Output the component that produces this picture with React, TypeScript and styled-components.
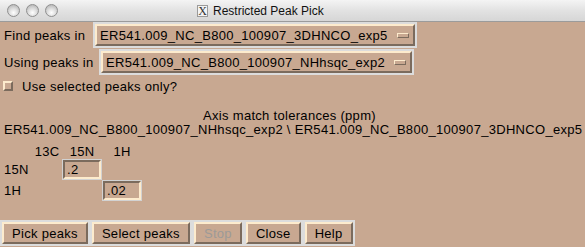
import styled, { createGlobalStyle } from "styled-components";

const BG = "#c8a891";
const LIGHT = "#fdebcd";
const DARK = "#7b6b5d";
const RING = "#dcdcdc";

const GlobalStyle = createGlobalStyle`
  html, body {
    margin: 0;
    padding: 0;
    background: ${BG};
  }
`;

const Window = styled.div`
  width: 585px;
  height: 247px;
  display: flex;
  flex-direction: column;
  background: ${BG};
  font-family: "Liberation Sans", Arial, sans-serif;
  font-size: 13px;
  letter-spacing: 0.3px;
  color: #000;
  overflow: hidden;
`;

const TitleBar = styled.div`
  height: 21px;
  flex: none;
  display: flex;
  align-items: center;
  background: linear-gradient(#f4f4f4, #e2e2e2 50%, #d6d6d6);
  border-bottom: 1px solid #9b9b9b;
  padding-left: 7px;
`;

const Lights = styled.div`
  display: flex;
  gap: 6px;
`;

const Light = styled.span`
  width: 13px;
  height: 13px;
  border-radius: 50%;
  box-sizing: border-box;
  border: 1px solid #8f8f8f;
  background: radial-gradient(circle at 50% 70%, #ffffff 0%, #dcdcdc 45%, #a9a9a9 100%);
`;

const TitleGroup = styled.div`
  display: flex;
  align-items: center;
  gap: 5px;
  margin-left: 139px;
  font-size: 12px;
  letter-spacing: 0;
  color: #111;
`;

const XBadge = styled.span`
  width: 11px;
  height: 12px;
  box-sizing: border-box;
  border: 1px solid #9a9a9a;
  background: #f4f4f4;
  font-family: "Liberation Serif", serif;
  font-size: 12px;
  line-height: 10px;
  text-align: center;
  color: #333;
`;

const Body = styled.div`
  flex: 1;
  display: flex;
  flex-direction: column;
`;

const PickRow = styled.div<{ top?: number }>`
  display: flex;
  align-items: center;
  height: 26px;
  margin-top: ${({ top }) => top ?? 0}px;
  padding-left: 4px;
`;

const RowLabel = styled.span<{ width: number }>`
  width: ${({ width }) => width}px;
  flex: none;
`;

const Ring = styled.div`
  border: 2px solid ${RING};
  display: flex;
`;

const MenuButton = styled.div`
  height: 22px;
  box-sizing: border-box;
  display: flex;
  align-items: center;
  gap: 9px;
  padding: 0 4px 0 3px;
  border: 2px solid;
  border-color: ${LIGHT} ${DARK} ${DARK} ${LIGHT};
  background: ${BG};
`;

const Indicator = styled.span`
  width: 12px;
  height: 5px;
  box-sizing: border-box;
  border: 1px solid;
  border-color: ${LIGHT} ${DARK} ${DARK} ${LIGHT};
  background: ${BG};
`;

const CheckRow = styled.label`
  display: flex;
  align-items: center;
  height: 22px;
  padding-left: 3px;
  gap: 9px;
`;

const CheckBox = styled.span`
  width: 10px;
  height: 10px;
  box-sizing: border-box;
  border: 2px solid;
  border-color: ${LIGHT} ${DARK} ${DARK} ${LIGHT};
  background: ${BG};
`;

const Caption = styled.div`
  margin-top: 12px;
  padding-left: 4px;
  line-height: 14px;
`;

const CaptionTitle = styled.div`
  text-align: center;
  padding-right: 10px;
`;

const Matrix = styled.div`
  margin-top: 8px;
  display: grid;
  grid-template-columns: 28px 30px 40px 40px;
  grid-template-rows: 14px 21px 21px;
  padding-left: 4px;
  align-items: center;
`;

const Head = styled.span`
  text-align: center;
  line-height: 14px;
`;

const Entry = styled.div`
  height: 21px;
  box-sizing: border-box;
  border: 1px solid #d2d2d2;
  display: flex;
`;

const EntryField = styled.div`
  flex: 1;
  box-sizing: border-box;
  border: 2px solid;
  border-color: ${DARK} ${LIGHT} ${LIGHT} ${DARK};
  background: ${BG};
  padding-left: 2px;
  line-height: 15px;
`;

const ButtonBar = styled.div`
  margin-top: auto;
  margin-bottom: 1px;
  display: flex;
`;

const Button = styled.div<{ disabled?: boolean }>`
  height: 26px;
  box-sizing: border-box;
  border: 2px solid ${RING};
  display: flex;

  & > span {
    flex: 1;
    display: flex;
    align-items: center;
    justify-content: center;
    padding: 0 8px;
    border: 2px solid;
    border-color: ${LIGHT} ${DARK} ${DARK} ${LIGHT};
    color: ${({ disabled }) => (disabled ? "#9c9a98" : "#000")};
  }
`;

const fileA = "ER541.009_NC_B800_100907_3DHNCO_exp5";
const fileB = "ER541.009_NC_B800_100907_NHhsqc_exp2";

export default function App() {
  return (
    <Window>
      <GlobalStyle />
      <TitleBar>
        <Lights>
          <Light />
          <Light />
          <Light />
        </Lights>
        <TitleGroup>
          <XBadge>X</XBadge>
          <span>Restricted Peak Pick</span>
        </TitleGroup>
      </TitleBar>
      <Body>
        <PickRow>
          <RowLabel width={89}>Find peaks in</RowLabel>
          <Ring>
            <MenuButton>
              <span>{fileA}</span>
              <Indicator />
            </MenuButton>
          </Ring>
        </PickRow>
        <PickRow top={1}>
          <RowLabel width={95}>Using peaks in</RowLabel>
          <Ring>
            <MenuButton>
              <span>{fileB}</span>
              <Indicator />
            </MenuButton>
          </Ring>
        </PickRow>
        <CheckRow>
          <CheckBox />
          <span>Use selected peaks only?</span>
        </CheckRow>
        <Caption>
          <CaptionTitle>Axis match tolerances (ppm)</CaptionTitle>
          <div>
            {fileB} \ {fileA}
          </div>
        </Caption>
        <Matrix>
          <span />
          <Head>13C</Head>
          <Head>15N</Head>
          <Head>1H</Head>
          <span>15N</span>
          <span />
          <Entry>
            <EntryField>.2</EntryField>
          </Entry>
          <span />
          <span>1H</span>
          <span />
          <span />
          <Entry>
            <EntryField>.02</EntryField>
          </Entry>
        </Matrix>
        <ButtonBar>
          <Button>
            <span>Pick peaks</span>
          </Button>
          <Button>
            <span>Select peaks</span>
          </Button>
          <Button disabled>
            <span>Stop</span>
          </Button>
          <Button>
            <span>Close</span>
          </Button>
          <Button>
            <span>Help</span>
          </Button>
        </ButtonBar>
      </Body>
    </Window>
  );
}
